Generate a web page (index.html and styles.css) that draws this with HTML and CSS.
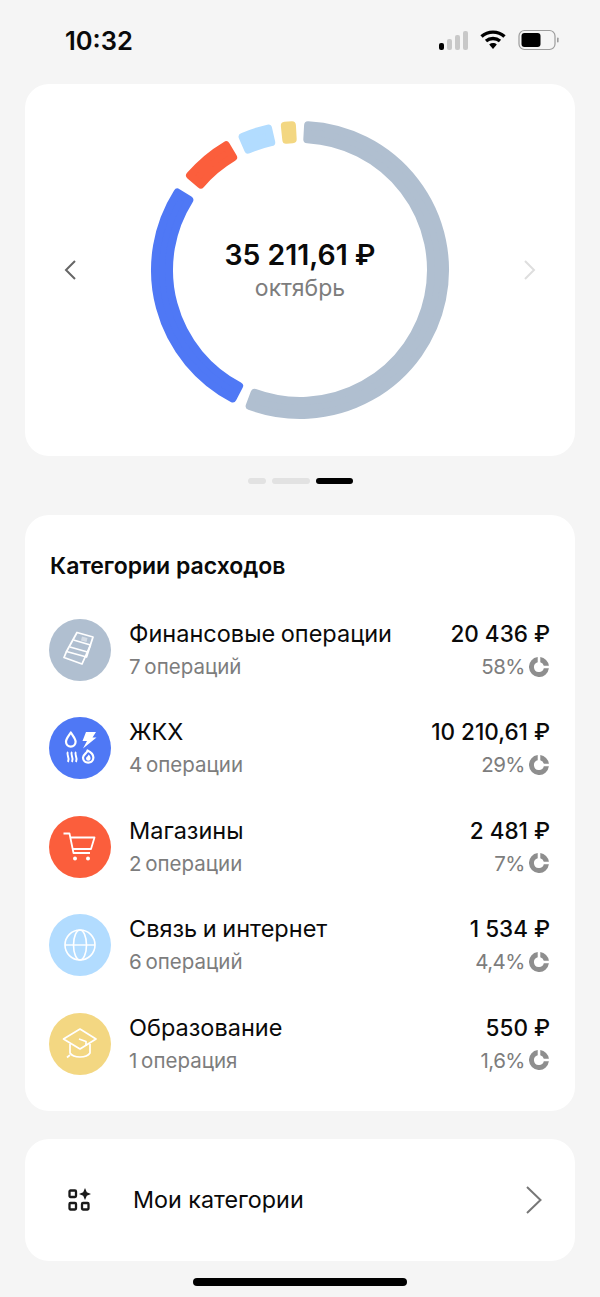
FILE: index.html
```html
<!DOCTYPE html>
<html lang="ru">
<head>
    <meta charset="UTF-8">
    <meta name="viewport" content="width=device-width, initial-scale=1.0">
    <title>Категории расходов</title>
    <link rel="stylesheet" href="styles.css">
</head>
<body>
    <svg class="sprite" width="0" height="0">
        <symbol id="mini-pie" viewBox="0 0 20 20">
            <path d="M11.3 0.1A10 10 0 0 1 19.9 8.7H14.8A5 5 0 0 0 11.3 5.2Z"/>
            <path d="M19.9 11.3A10 10 0 1 1 8.7 0.1V5.2A5 5 0 1 0 14.8 11.3Z"/>
        </symbol>
    </svg>

    <div class="status-bar">
        <span class="time">10:32</span>
        <div class="status-icons">
            <svg class="signal" width="30" height="20" viewBox="0 0 30 20">
                <rect x="1" y="13" width="5" height="7" rx="2" fill="#000"/>
                <rect x="9" y="9" width="5" height="11" rx="2" fill="#c8c8c8"/>
                <rect x="17" y="5" width="5" height="15" rx="2" fill="#c8c8c8"/>
                <rect x="25" y="1" width="5" height="19" rx="2" fill="#c8c8c8"/>
            </svg>
            <svg class="wifi" width="26" height="20" viewBox="0 0 26 20">
                <path d="M1.5 6.5C8 .6 18 .6 24.5 6.5" fill="none" stroke="#000" stroke-width="3.4"/>
                <path d="M6 11C10 7.6 16 7.6 20 11" fill="none" stroke="#000" stroke-width="3.4"/>
                <path d="M9.2 14.4C11.4 12.6 14.6 12.6 16.8 14.4L13 19Z" fill="#000"/>
            </svg>
            <svg class="battery" width="42" height="22" viewBox="0 0 42 22">
                <rect x="1" y="1.5" width="36" height="19" rx="5.5" fill="none" stroke="#9c9c9c" stroke-width="1.2"/>
                <rect x="3.5" y="4" width="19" height="14" rx="3" fill="#000"/>
                <rect x="39" y="8.5" width="1.6" height="5" rx="0.8" fill="#9c9c9c"/>
            </svg>
        </div>
    </div>

    <section class="card chart-card">
        <svg class="chevron" width="14" height="22" viewBox="0 0 14 22">
            <path d="M12 2L3 11L12 20" fill="none" stroke="#666" stroke-width="2"/>
        </svg>
        <div class="donut">
            <svg width="300" height="300" viewBox="-150 -150 300 300">
                <g stroke-width="8" stroke-linejoin="round">
                    <path fill="#b0bfd0" stroke="#b0bfd0" d="M8.09 -144.77A145 145 0 1 1 -50.31 135.99L-45.45 122.86A131 131 0 1 0 7.31 -130.8Z"/>
                    <path fill="#4f78f5" stroke="#4f78f5" d="M-67.4 128.38A145 145 0 0 1 -122.56 -77.48L-110.73 -70A131 131 0 0 0 -60.89 115.99Z"/>
                    <path fill="#fb5e3c" stroke="#fb5e3c" d="M-109.93 -94.55A145 145 0 0 1 -74.03 -124.68L-66.88 -112.64A131 131 0 0 0 -99.31 -85.43Z"/>
                    <path fill="#b2dcff" stroke="#b2dcff" d="M-57.35 -133.18A145 145 0 0 1 -31.88 -141.45L-28.8 -127.8A131 131 0 0 0 -51.82 -120.32Z"/>
                    <path fill="#f3d782" stroke="#f3d782" d="M-15.16 -144.21A145 145 0 0 1 -8.09 -144.77L-7.31 -130.8A131 131 0 0 0 -13.69 -130.28Z"/>
                </g>
            </svg>
            <div class="donut-label">
                <div class="total">35 211,61 ₽</div>
                <div class="month">октябрь</div>
            </div>
        </div>
        <svg class="chevron" width="14" height="22" viewBox="0 0 14 22">
            <path d="M2 2L11 11L2 20" fill="none" stroke="#dedede" stroke-width="2"/>
        </svg>
    </section>

    <div class="pager">
        <span class="dot dot-short"></span>
        <span class="dot dot-long"></span>
        <span class="dot dot-active"></span>
    </div>

    <section class="card list-card">
        <h2>Категории расходов</h2>
        <div class="rows">
            <div class="row">
                <div class="circle bg-grey">
                    <svg width="62" height="62" viewBox="0 0 62 62" fill="none" stroke="#fff" stroke-width="1.8" stroke-linejoin="round">
                        <path d="M28 13.5L44 18L37.5 38L17.5 32.5Z"/>
                        <path d="M17.5 32.5L15 38.5L33 45L41.5 26"/>
                        <path d="M24.5 21L41.5 26M21 28L38.5 33"/>
                        <path d="M33 17.5L38.5 19L37.5 23L32 21.5Z" fill="#d5dde6" stroke="none"/>
                    </svg>
                </div>
                <div class="row-text">
                    <div class="row-title">Финансовые операции</div>
                    <div class="row-sub">7 операций</div>
                </div>
                <div class="row-values">
                    <div class="row-sum">20 436 ₽</div>
                    <div class="row-share">58%<svg class="pie"><use href="#mini-pie"/></svg></div>
                </div>
            </div>
            <div class="row">
                <div class="circle bg-blue">
                    <svg width="62" height="62" viewBox="0 0 62 62" fill="none" stroke="#fff" stroke-width="2.2" stroke-linejoin="round">
                        <path d="M21.8 15.5C19.5 19 17 21.5 17 24.8A4.8 4.8 0 0 0 26.6 24.8C26.6 21.5 24 19 21.8 15.5Z"/>
                        <path d="M37 15H47L43.5 20.5H47.5L34 31.5L38 24H33.5Z" fill="#fff" stroke="none"/>
                        <path d="M19 35C16.5 37.5 21.5 40 19 45M23 35C20.5 37.5 25.5 40 23 45M27 35C24.5 37.5 29.5 40 27 45" stroke-width="2"/>
                        <path d="M38.5 33.5C38.5 36 34 37.5 34 40.5A5.2 5.2 0 0 0 44.4 40.5C44.4 37 41.5 35 38.5 33.5Z"/>
                        <path d="M39.5 37.5C39.5 39 37 39.8 37 41.4A2.3 2.3 0 0 0 41.6 41.4C41.6 39.8 40.8 38.5 39.5 37.5Z" fill="#fff" stroke="none"/>
                    </svg>
                </div>
                <div class="row-text">
                    <div class="row-title">ЖКХ</div>
                    <div class="row-sub">4 операции</div>
                </div>
                <div class="row-values">
                    <div class="row-sum">10 210,61 ₽</div>
                    <div class="row-share">29%<svg class="pie"><use href="#mini-pie"/></svg></div>
                </div>
            </div>
            <div class="row">
                <div class="circle bg-red">
                    <svg width="62" height="62" viewBox="0 0 62 62" fill="none" stroke="#fff" stroke-width="1.8" stroke-linejoin="round">
                        <path d="M14.5 17.5H20.5L24.5 37H41"/>
                        <path d="M21.5 21.5H45.5L42 33H24"/>
                        <circle cx="26" cy="42.5" r="2" fill="#fff" stroke="none"/>
                        <circle cx="39" cy="42.5" r="2" fill="#fff" stroke="none"/>
                    </svg>
                </div>
                <div class="row-text">
                    <div class="row-title">Магазины</div>
                    <div class="row-sub">2 операции</div>
                </div>
                <div class="row-values">
                    <div class="row-sum">2 481 ₽</div>
                    <div class="row-share">7%<svg class="pie"><use href="#mini-pie"/></svg></div>
                </div>
            </div>
            <div class="row">
                <div class="circle bg-sky">
                    <svg width="62" height="62" viewBox="0 0 62 62" fill="none" stroke="#fff" stroke-width="1.6">
                        <circle cx="31" cy="31" r="15"/>
                        <ellipse cx="31" cy="31" rx="6.5" ry="15"/>
                        <path d="M16 31H46" stroke-width="1.4"/>
                    </svg>
                </div>
                <div class="row-text">
                    <div class="row-title">Связь и интернет</div>
                    <div class="row-sub">6 операций</div>
                </div>
                <div class="row-values">
                    <div class="row-sum">1 534 ₽</div>
                    <div class="row-share">4,4%<svg class="pie"><use href="#mini-pie"/></svg></div>
                </div>
            </div>
            <div class="row">
                <div class="circle bg-yellow">
                    <svg width="62" height="62" viewBox="0 0 62 62" fill="none" stroke="#fff" stroke-width="1.7" stroke-linejoin="round">
                        <path d="M31 16L47 26L31 36L14.5 26Z"/>
                        <path d="M21 31V40C23 43 27 44 31 44C35 44 39 43 41 40V31"/>
                        <path d="M30 26L37 28.5V33"/>
                        <path d="M21 42L18 44.5"/>
                    </svg>
                </div>
                <div class="row-text">
                    <div class="row-title">Образование</div>
                    <div class="row-sub">1 операция</div>
                </div>
                <div class="row-values">
                    <div class="row-sum">550 ₽</div>
                    <div class="row-share">1,6%<svg class="pie"><use href="#mini-pie"/></svg></div>
                </div>
            </div>
        </div>
    </section>

    <section class="card link-card">
        <svg class="link-icon" width="24" height="24" viewBox="0 0 24 24" fill="none" stroke="#1a1a1a" stroke-width="2.3">
            <rect x="1.5" y="2.5" width="6.5" height="6.5" rx="1"/>
            <rect x="1.5" y="15" width="6.5" height="6.5" rx="1"/>
            <rect x="14" y="15" width="6.5" height="6.5" rx="1"/>
            <path d="M17 0L18.8 4.2L23 6L18.8 7.8L17 12L15.2 7.8L11 6L15.2 4.2Z" fill="#1a1a1a" stroke="none"/>
        </svg>
        <span class="link-text">Мои категории</span>
        <svg width="18" height="30" viewBox="0 0 18 30">
            <path d="M2 2L15.5 15L2 28" fill="none" stroke="#777" stroke-width="2"/>
        </svg>
    </section>

    <div class="home-bar"></div>
</body>
</html>
```

FILE: styles.css
```css
body {
    margin: 0;
    width: 600px;
    height: 1297px;
    overflow: hidden;
    background-color: #f5f5f5;
    font-family: Inter, "Noto Sans", sans-serif;
    color: #0a0a0a;
}
.sprite {
    display: block;
    height: 0;
}
.status-bar {
    height: 84px;
    box-sizing: border-box;
    padding: 0 40px 4px 65px;
    display: flex;
    align-items: center;
    justify-content: space-between;
}
.time {
    font-size: 25.5px;
    font-weight: 600;
}
.status-icons {
    display: flex;
    align-items: center;
    gap: 12px;
}
.card {
    margin: 0 25px;
    background-color: #fff;
    border-radius: 24px;
}
.chart-card {
    height: 372px;
    padding: 0 38px;
    box-sizing: border-box;
    display: flex;
    align-items: center;
    justify-content: space-between;
}
.donut {
    position: relative;
    width: 300px;
    height: 300px;
}
.donut-label {
    position: absolute;
    top: 117px;
    left: 0;
    right: 0;
    text-align: center;
}
.total {
    font-size: 28.4px;
    font-weight: 600;
    line-height: 36px;
}
.month {
    font-size: 23px;
    line-height: 30px;
    color: #7d7d7d;
}
.pager {
    height: 49px;
    padding-bottom: 10px;
    display: flex;
    align-items: center;
    justify-content: center;
    gap: 6px;
}
.dot {
    height: 6px;
    border-radius: 3px;
    background-color: #e2e2e2;
}
.dot-short {
    width: 18px;
}
.dot-long {
    width: 38px;
}
.dot-active {
    width: 37px;
    background-color: #000;
}
.list-card {
    height: 596px;
    padding: 36px 25px 0 24px;
    box-sizing: border-box;
}
h2 {
    margin: 0 0 38px 1px;
    font-size: 23px;
    font-weight: 600;
    line-height: 30px;
}
.rows {
    display: grid;
    gap: 36.4px;
}
.row {
    display: flex;
    align-items: center;
    height: 62px;
}
.circle {
    width: 62px;
    height: 62px;
    border-radius: 50%;
    flex-shrink: 0;
}
.circle svg {
    display: block;
}
.bg-grey { background-color: #b0bfd0; }
.bg-blue { background-color: #4f78f5; }
.bg-red { background-color: #fb5e3c; }
.bg-sky { background-color: #b2dcff; }
.bg-yellow { background-color: #f3d782; }
.row-text {
    flex: 1;
    margin-left: 18px;
}
.row-title {
    font-size: 23.5px;
    line-height: 33px;
    word-spacing: -1px;
}
.row-sum {
    font-size: 22.5px;
    font-weight: 450;
    line-height: 33px;
}
.row-sub,
.row-share {
    font-size: 20.5px;
    line-height: 33px;
    color: #7d7d7d;
}
.row-sub {
    word-spacing: -2px;
}
.row-values {
    text-align: right;
}
.row-share {
    display: flex;
    align-items: center;
    justify-content: flex-end;
    gap: 4px;
    letter-spacing: -0.5px;
}
.pie {
    width: 20px;
    height: 20px;
    margin-right: 1px;
    fill: #8e8e8e;
}
.link-card {
    margin-top: 28px;
    height: 122px;
    padding: 0 32px 0 43px;
    box-sizing: border-box;
    display: flex;
    align-items: center;
}
.link-text {
    flex: 1;
    margin: 0 0 2px 41px;
    font-size: 23.3px;
}
.home-bar {
    width: 214px;
    height: 8px;
    margin: 17px auto 0;
    border-radius: 4px;
    background-color: #000;
}
```
